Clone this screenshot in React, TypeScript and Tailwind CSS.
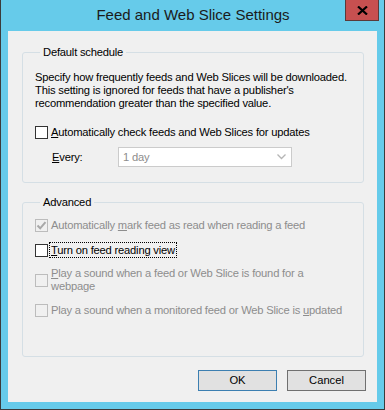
import React from 'react'

function Checkbox({ checked = false, disabled = false }: { checked?: boolean; disabled?: boolean }) {
  return (
    <span
      className={`flex h-[13px] w-[13px] shrink-0 items-center justify-center border ${
        disabled ? 'border-[#bcbcbc] bg-[#f0f0f0]' : 'border-[#333333] bg-white'
      }`}
    >
      {checked && (
        <svg width="11" height="11" viewBox="0 0 11 11">
          <path d="M1.5 5.5 L4.2 8.3 L9.5 2.2" fill="none" stroke={disabled ? '#a8a8a8' : '#333'} strokeWidth="2" />
        </svg>
      )}
    </span>
  )
}

function Option({
  label,
  checked,
  disabled,
  focused
}: {
  label: React.ReactNode
  checked?: boolean
  disabled?: boolean
  focused?: boolean
}) {
  return (
    <div className={`flex items-center gap-[2px] ${disabled ? 'text-[#8d8d8d]' : 'text-black'}`}>
      <Checkbox checked={checked} disabled={disabled} />
      <span
        className={`whitespace-nowrap px-px leading-[14px] ${
          focused ? 'outline outline-1 outline-dotted outline-black' : ''
        }`}
      >
        {label}
      </span>
    </div>
  )
}

export default function App() {
  return (
    <div
      className="flex h-[410px] w-[385px] flex-col border-x border-b border-[#3b3b3b] bg-[#66cbea] text-[11.2px] tracking-[-0.2px] text-black"
      style={{ fontFamily: '"Liberation Sans", Arial, sans-serif' }}
    >
      {/* Title bar */}
      <div className="relative flex h-[31px] shrink-0 items-center justify-center pl-[1px] text-[15px] tracking-normal text-[#1b1b1b]">
        Feed and Web Slice Settings
        <button className="absolute right-[5px] top-0 flex h-[21px] w-[34px] items-center justify-center border-x border-b border-[#5a3a3a] bg-[#c75050]">
          <svg width="11" height="9" viewBox="0 0 11 9">
            <path d="M1 0.5 L10 8.5 M10 0.5 L1 8.5" stroke="#000" strokeWidth="2.2" />
          </svg>
        </button>
      </div>

      {/* Client area */}
      <div className="mx-[7px] mb-[7px] flex flex-1 flex-col bg-[#f0f0f0] pl-[14px] pr-[11px] pt-[14px]">
        <fieldset className="mr-[2px] h-[138px] rounded-[3px] border border-[#d5dfe5] px-[12px]">
          <legend className="ml-[5px] px-[3px] leading-[14px]">Default schedule</legend>
          <p className="mt-[12px] whitespace-nowrap leading-[13px]">
            Specify how frequently feeds and Web Slices will be downloaded.
            <br />
            This setting is ignored for feeds that have a publisher's
            <br />
            recommendation greater than the specified value.
          </p>
          <div className="mt-[15px]">
            <Option
              label={
                <>
                  <u>A</u>utomatically check feeds and Web Slices for updates
                </>
              }
            />
          </div>
          <div className="mt-[8px] flex items-center">
            <span className="w-[83px] pl-[17px]">
              <u>E</u>very:
            </span>
            <div className="flex h-[20px] w-[174px] items-center justify-between border border-[#cbcbcb] bg-white pl-[4px] pr-[5px] text-[#8d8d8d]">
              <span>1 day</span>
              <svg width="9" height="6" viewBox="0 0 9 6">
                <path d="M0.5 0.5 L4.5 4.5 L8.5 0.5" fill="none" stroke="#b5b5b5" strokeWidth="1.3" />
              </svg>
            </div>
          </div>
        </fieldset>

        <fieldset className="mr-[2px] mt-[12px] h-[162px] rounded-[3px] border border-[#d5dfe5] px-[12px]">
          <legend className="ml-[5px] px-[3px] leading-[14px]">Advanced</legend>
          <div className="mt-[9px] flex flex-col">
            <Option
              checked
              disabled
              label={
                <>
                  Automatically <u>m</u>ark feed as read when reading a feed
                </>
              }
            />
            <div className="mt-[11px]">
              <Option
                focused
                label={
                  <>
                    <u>T</u>urn on feed reading view
                  </>
                }
              />
            </div>
            <div className="mt-[10px]">
              <Option
                disabled
                label={
                  <span className="block leading-[13px]">
                    <u>P</u>lay a sound when a feed or Web Slice is found for a
                    <br />
                    webpage
                  </span>
                }
              />
            </div>
            <div className="mt-[10px]">
              <Option
                disabled
                label={
                  <>
                    Play a sound when a monitored feed or Web Slice is <u>u</u>pdated
                  </>
                }
              />
            </div>
          </div>
        </fieldset>

        <div className="mt-[13px] flex justify-end gap-[10px]">
          <button className="h-[21px] w-[79px] border border-[#3c7fb1] bg-[#e1e1e1] tracking-normal">OK</button>
          <button className="h-[21px] w-[79px] border border-[#707070] bg-[#e1e1e1] tracking-normal">Cancel</button>
        </div>
      </div>
    </div>
  )
}
